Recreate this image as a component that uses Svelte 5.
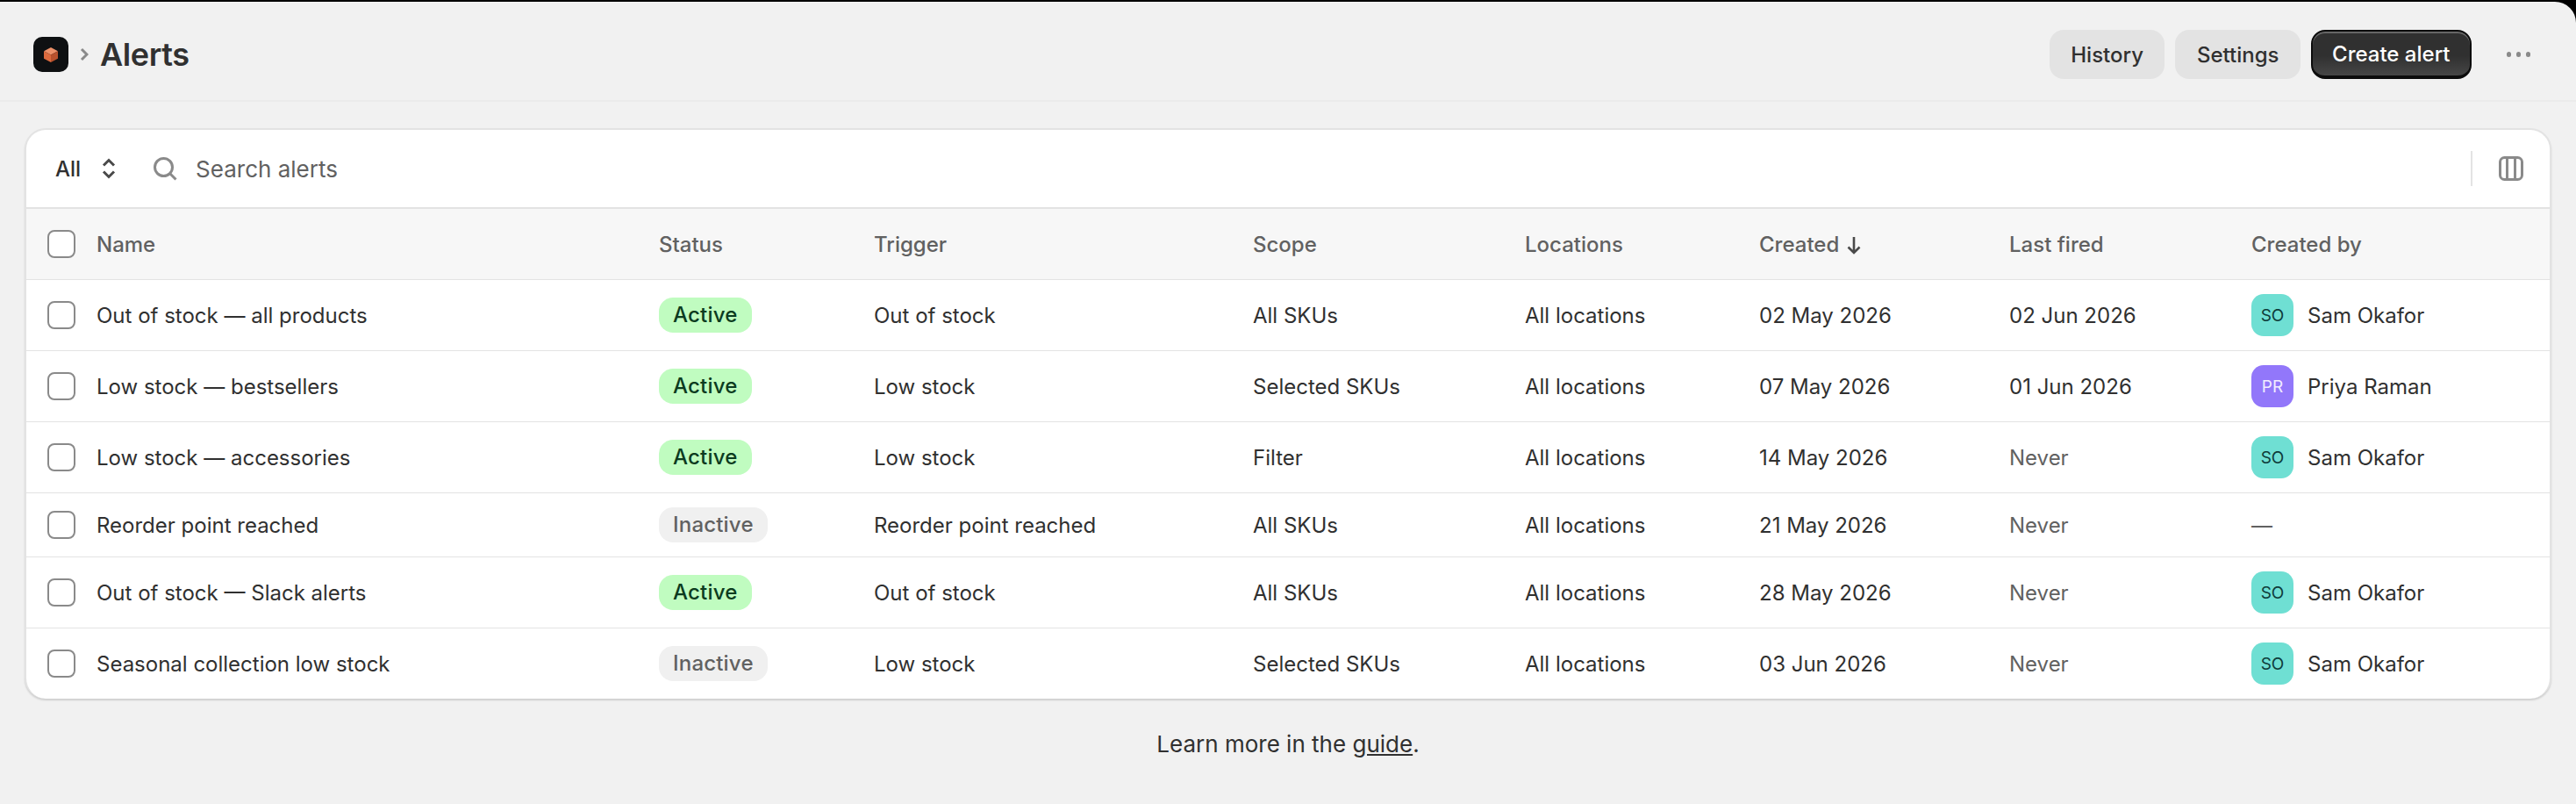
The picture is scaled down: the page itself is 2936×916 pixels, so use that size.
<script>
    const columns = ['Status', 'Trigger', 'Scope', 'Locations', 'Created', 'Last fired', 'Created by']

    const sam = { initials: 'SO', name: 'Sam Okafor', tone: 'teal' }
    const priya = { initials: 'PR', name: 'Priya Raman', tone: 'violet' }

    const alerts = [
        { name: 'Out of stock — all products', active: true, trigger: 'Out of stock', scope: 'All SKUs', created: '02 May 2026', fired: '02 Jun 2026', by: sam },
        { name: 'Low stock — bestsellers', active: true, trigger: 'Low stock', scope: 'Selected SKUs', created: '07 May 2026', fired: '01 Jun 2026', by: priya },
        { name: 'Low stock — accessories', active: true, trigger: 'Low stock', scope: 'Filter', created: '14 May 2026', fired: null, by: sam },
        { name: 'Reorder point reached', active: false, trigger: 'Reorder point reached', scope: 'All SKUs', created: '21 May 2026', fired: null, by: null },
        { name: 'Out of stock — Slack alerts', active: true, trigger: 'Out of stock', scope: 'All SKUs', created: '28 May 2026', fired: null, by: sam },
        { name: 'Seasonal collection low stock', active: false, trigger: 'Low stock', scope: 'Selected SKUs', created: '03 Jun 2026', fired: null, by: sam },
    ]
</script>

<div class="shell">
    <header class="topbar">
        <div class="logo">
            <svg viewBox="0 0 16 17" width="16" height="17">
                <path d="M8 0 16 4.3 8 8.6 0 4.3Z" fill="#ec9069" />
                <path d="M0 4.3 8 8.6V17L0 12.7Z" fill="#dc6a3e" />
                <path d="M16 4.3 8 8.6V17L16 12.7Z" fill="#b8512d" />
            </svg>
        </div>
        <svg class="crumb" viewBox="0 0 10 16" width="10" height="16">
            <path d="M2 2 8 8 2 14" fill="none" stroke="#8a8a8a" stroke-width="3" />
        </svg>
        <h1>Alerts</h1>
        <div class="actions">
            <button class="btn">History</button>
            <button class="btn">Settings</button>
            <button class="btn primary">Create alert</button>
            <button class="more" aria-label="More actions">
                <i></i><i></i><i></i>
            </button>
        </div>
    </header>

    <section class="card">
        <div class="toolbar">
            <span class="filter">All</span>
            <svg class="updown" viewBox="0 0 16 24" width="16" height="24">
                <path d="M2 8.5 8 2.5 14 8.5M2 15.5 8 21.5 14 15.5" fill="none" stroke="#4a4a4a" stroke-width="3" />
            </svg>
            <svg class="search" viewBox="0 0 27 27" width="27" height="27">
                <circle cx="11.5" cy="11.5" r="10" fill="none" stroke="#8a8a8a" stroke-width="3" />
                <path d="M18.5 18.5 25.5 25.5" stroke="#8a8a8a" stroke-width="3" />
            </svg>
            <span class="placeholder">Search alerts</span>
            <span class="divider"></span>
            <svg class="cols" viewBox="0 0 28 28" width="28" height="28">
                <rect x="1.5" y="1.5" width="25" height="25" rx="5" fill="none" stroke="#8a8a8a" stroke-width="3" />
                <path d="M9.5 2V26M18.5 2V26" stroke="#8a8a8a" stroke-width="3" />
            </svg>
        </div>

        <table>
            <colgroup>
                <col style="width: 721px" />
                <col style="width: 245px" />
                <col style="width: 432px" />
                <col style="width: 310px" />
                <col style="width: 267px" />
                <col style="width: 285px" />
                <col style="width: 276px" />
                <col style="width: 340px" />
            </colgroup>
            <thead>
                <tr>
                    <th>
                        <div class="namecell">
                            <span class="check"></span>
                            Name
                        </div>
                    </th>
                    {#each columns as col}
                        <th>
                            {col}
                            {#if col === 'Created'}
                                <svg class="sort" viewBox="0 0 16 20" width="16" height="20">
                                    <path d="M8 0V18M1.5 11.5 8 18 14.5 11.5" fill="none" stroke="#4a4a4a" stroke-width="2.6" />
                                </svg>
                            {/if}
                        </th>
                    {/each}
                </tr>
            </thead>
            <tbody>
                {#each alerts as alert}
                    <tr>
                        <td>
                            <div class="namecell">
                                <span class="check"></span>
                                {alert.name}
                            </div>
                        </td>
                        <td>
                            <span class="badge" class:active={alert.active}>{alert.active ? 'Active' : 'Inactive'}</span>
                        </td>
                        <td>{alert.trigger}</td>
                        <td>{alert.scope}</td>
                        <td>All locations</td>
                        <td>{alert.created}</td>
                        <td class:muted={!alert.fired}>{alert.fired ?? 'Never'}</td>
                        <td>
                            {#if alert.by}
                                <div class="person">
                                    <span class="avatar {alert.by.tone}">{alert.by.initials}</span>
                                    {alert.by.name}
                                </div>
                            {:else}
                                <span class="muted">—</span>
                            {/if}
                        </td>
                    </tr>
                {/each}
            </tbody>
        </table>
    </section>

    <p class="foot">Learn more in the <a href="#guide">guide</a>.</p>
</div>

<style>
    :global(body) {
        margin: 0;
        background: #000;
        font-family: Inter, "Liberation Sans", sans-serif;
        font-size: 24px;
        color: #303030;
    }

    .shell {
        margin-top: 2px;
        height: 914px;
        background: #f1f1f1;
        border-top-right-radius: 24px;
        overflow: hidden;
    }

    .topbar {
        display: flex;
        align-items: center;
        padding: 32px 52px 24px 38px;
        border-bottom: 2px solid #ebebeb;
    }

    .logo {
        width: 40px;
        height: 40px;
        display: flex;
        align-items: center;
        justify-content: center;
        background: #0e1012;
        border-radius: 10px;
    }

    .crumb {
        margin: 0 13px;
    }

    h1 {
        margin: 0;
        font-size: 36px;
        font-weight: 600;
        line-height: 56px;
        letter-spacing: -0.4px;
        color: #303030;
    }

    .actions {
        margin-left: auto;
        display: flex;
        align-items: center;
        gap: 12px;
    }

    .btn {
        height: 56px;
        padding: 0 24.5px;
        border: 0;
        border-radius: 16px;
        background: #e3e3e3;
        color: #303030;
        font: 550 24px Inter, sans-serif;
    }

    .primary {
        color: #fff;
        background: linear-gradient(#303030 55%, #464646);
        border: 2px solid #0c0c0c;
        border-bottom-width: 4px;
        padding: 0 22px;
        box-shadow: inset 0 2px 0 #666;
    }

    .more {
        margin-left: 28px;
        display: flex;
        gap: 5.5px;
        padding: 0;
        border: 0;
        background: none;
    }

    .more i {
        width: 5.5px;
        height: 5.5px;
        border-radius: 50%;
        background: #8a8a8a;
    }

    .card {
        margin: 30px 28px 0;
        background: #fff;
        border: 2px solid #e3e3e3;
        border-bottom: 0;
        border-radius: 24px;
        overflow: hidden;
        box-shadow: 0 2px 2px rgba(0, 0, 0, 0.14);
    }

    .toolbar {
        height: 88px;
        display: flex;
        align-items: center;
        padding: 0 30px 0 33px;
        border-bottom: 2px solid #e3e3e3;
    }

    .filter {
        font-weight: 550;
    }

    .updown {
        margin-left: 24px;
    }

    .search {
        margin-left: 43px;
    }

    .placeholder {
        margin-left: 21px;
        color: #616161;
        font-size: 26px;
    }

    .divider {
        margin-left: auto;
        width: 2px;
        height: 40px;
        background: #e3e3e3;
    }

    .cols {
        margin-left: 30px;
    }

    table {
        width: 100%;
        table-layout: fixed;
        border-collapse: separate;
        border-spacing: 0;
    }

    th {
        height: 80px;
        padding: 0;
        text-align: left;
        font-weight: 550;
        color: #616161;
        background: #f7f7f7;
        border-bottom: 1px solid #e3e3e3;
    }

    td {
        padding: 16px 0;
        border-bottom: 1px solid #e3e3e3;
    }

    tbody tr:last-child td {
        border-bottom: 0;
    }

    .namecell {
        display: flex;
        align-items: center;
        gap: 24px;
        padding-left: 24px;
    }

    .check {
        box-sizing: border-box;
        width: 32px;
        height: 32px;
        background: #fff;
        border: 2px solid #8a8a8a;
        border-radius: 8px;
    }

    .sort {
        margin-left: 2px;
        vertical-align: -3px;
    }

    .badge {
        display: inline-block;
        height: 40px;
        line-height: 40px;
        padding: 0 16px;
        border-radius: 16px;
        background: #f0f0f0;
        color: #616161;
        font-weight: 550;
        letter-spacing: 0.2px;
        vertical-align: middle;
    }

    .badge.active {
        background: #c0fcc0;
        color: #0c3b20;
    }

    .muted {
        color: #616161;
    }

    .person {
        display: flex;
        align-items: center;
        gap: 16px;
    }

    .avatar {
        width: 48px;
        height: 48px;
        display: flex;
        align-items: center;
        justify-content: center;
        border-radius: 14px;
        font-size: 19px;
    }

    .teal {
        background: #6fdfd3;
        color: #0d3b3a;
    }

    .violet {
        background: #9277fa;
        color: #f1edff;
    }

    .foot {
        margin: 32px 0 0;
        text-align: center;
        font-size: 26px;
        line-height: 40px;
    }

    .foot a {
        color: inherit;
    }
</style>
